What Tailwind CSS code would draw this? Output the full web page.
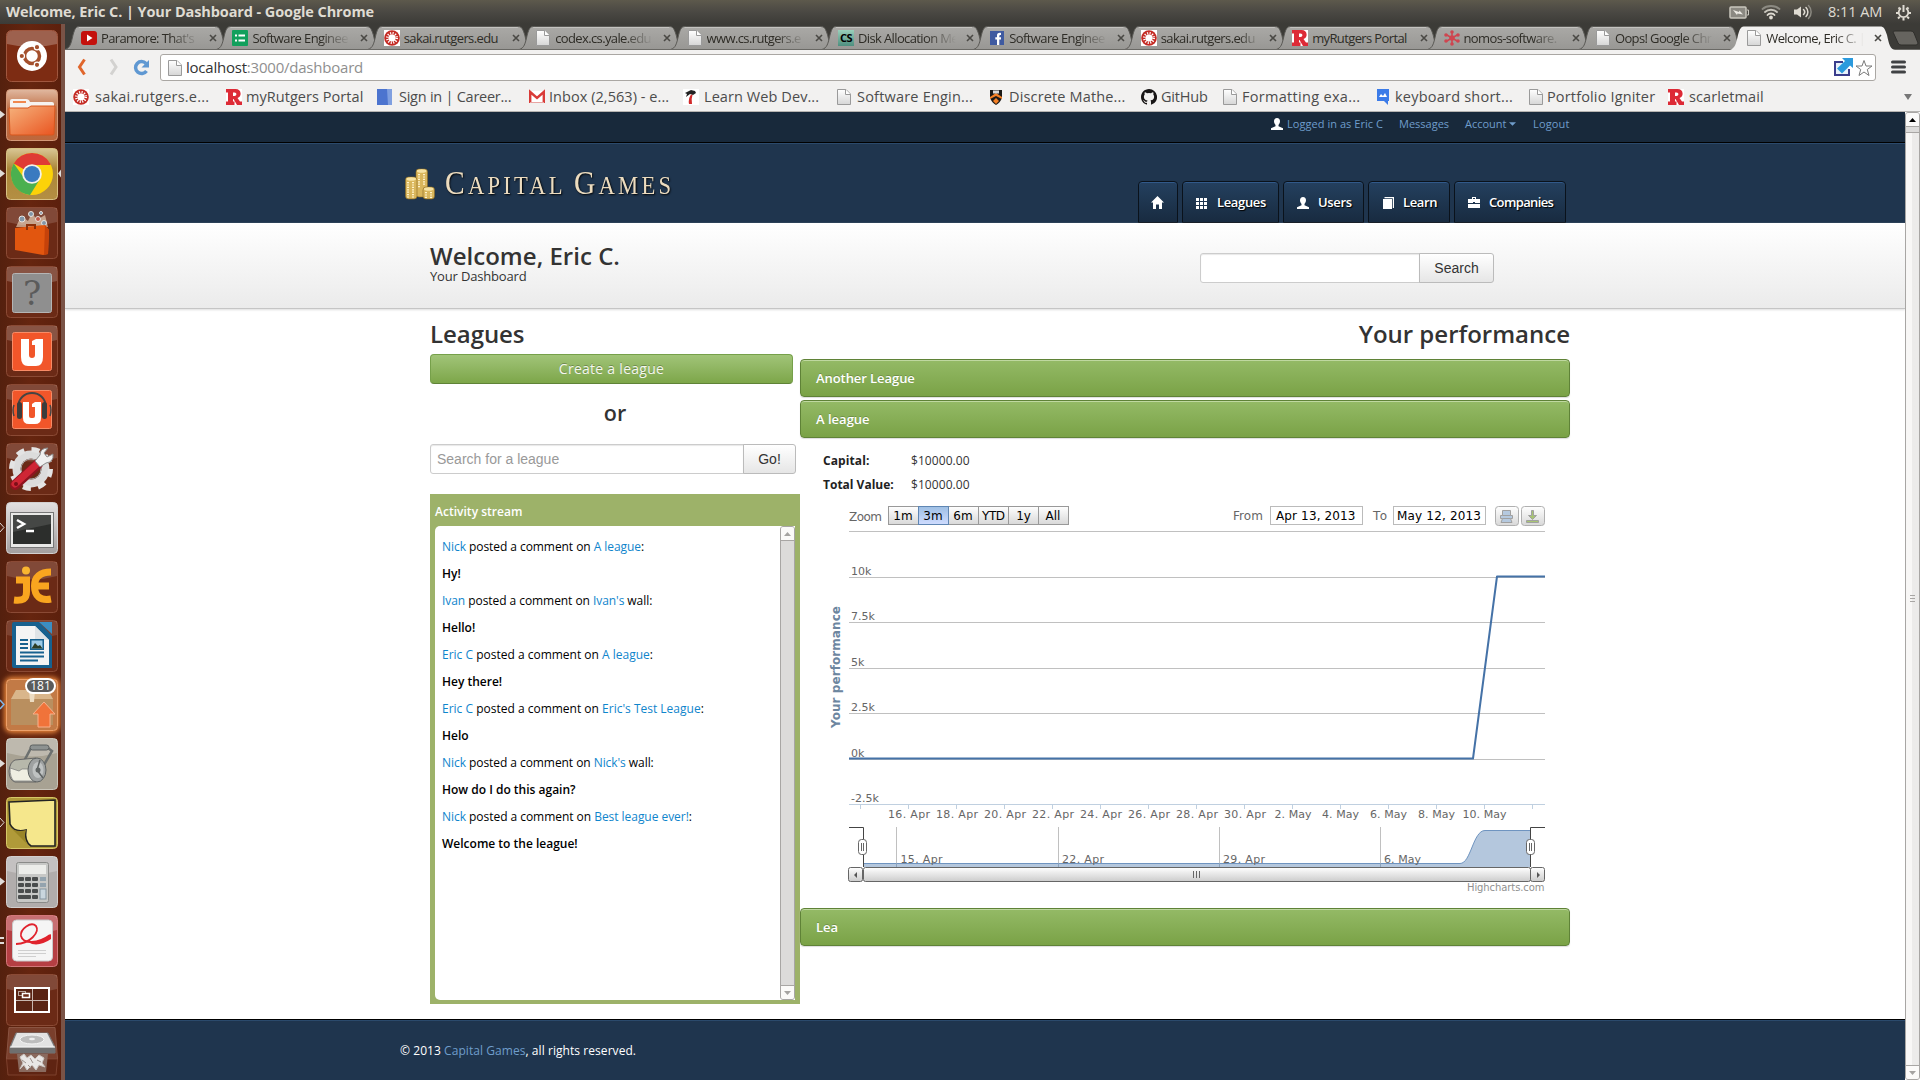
<!DOCTYPE html>
<html lang="en">
<head>
<meta charset="utf-8">
<title>Welcome, Eric C. | Your Dashboard</title>
<script src="https://cdn.jsdelivr.net/npm/@tailwindcss/browser@4"></script>
</head>
<body class="w-[1920px] h-[1080px] overflow-hidden bg-white font-['Open_Sans',sans-serif] flex flex-col">

<!-- shared symbols -->
<svg class="absolute w-0 h-0" aria-hidden="true">
  <defs>
    <linearGradient id="pg" x1="0" y1="0" x2="0" y2="1"><stop offset="0" stop-color="#fff"/><stop offset="1" stop-color="#d6d6d6"/></linearGradient>
    <linearGradient id="tabg" x1="0" y1="0" x2="0" y2="1"><stop offset="0" stop-color="#aaa9a6"/><stop offset="1" stop-color="#989794"/></linearGradient>
    <symbol id="page" viewBox="0 0 16 16"><path d="M1.5 .5H10L14.5 5V15.5H1.5Z" fill="url(#pg)" stroke="#9a9a9a"/><path d="M9.5 .5V5.5H14.5" fill="#fff" stroke="#9a9a9a"/></symbol>
    <symbol id="sakai" viewBox="0 0 16 16"><rect width="16" height="16" fill="#fff"/><circle cx="8" cy="8" r="7.8" fill="#c42b24"/><circle cx="8" cy="8" r="4.7" fill="none" stroke="#fff" stroke-width="2.6" stroke-dasharray="1.1 1.36"/><circle cx="8" cy="8" r="3.6" fill="#fff"/></symbol>
    <symbol id="rut" viewBox="0 0 16 16"><rect width="16" height="16" fill="#fff"/><path fill="#dd2a36" fill-rule="evenodd" d="M0 0H9.500C16 0 16 8 11.500 9L14 12.500H16V16H11L7.500 10H7V12.500H8.500V16H0V12.500H2V3.500H0ZM7 3.500V7H8.500C11 7 11 3.500 8.500 3.500Z"/></symbol>
    <symbol id="tab" viewBox="0 0 166 26"><path d="M0 25.500C5 24 6 20 8 11C10 4 11 2.500 15 2.500H150C154 2.500 155 5 157 11C159 20 160 24 165 25.500Z" fill="url(#tabg)" stroke="#5a5955"/><path d="M14 3.500H150" stroke="#c4c3c0" /></symbol>
  </defs>
</svg>

<!-- desktop panel -->
<header class="h-6 shrink-0 flex items-center justify-between pl-1.5 pr-2 bg-linear-to-b from-[#5d594c] via-[#4a4843] to-[#3c3b37] text-[#dfdbd2]">
  <span class="text-[14.5px] leading-6 font-bold tracking-[-0.1px]">Welcome, Eric C. | Your Dashboard - Google Chrome</span>
  <div class="flex items-center">
    <svg class="w-[20px] h-[13px]" viewBox="0 0 20 13"><rect x="1" y="1" width="16" height="11" rx="1" fill="#8b8982" stroke="#c9c6bd" stroke-width="1.500"/><path d="M18 4h1.500v5H18" fill="none" stroke="#c9c6bd"/><path d="M4 4l6 2 .5-1.500L14 8.500 8.500 7.500 8 9Z" fill="#eceae4"/></svg>
    <svg class="ml-3 w-[20px] h-[16px]" viewBox="0 0 20 16" fill="none" stroke-linecap="round" stroke-width="1.800"><path d="M1.500 5C6 1 14 1 18.500 5" stroke="#8c8a82"/><path d="M4 8C7 5 13 5 16 8" stroke="#c9c6bd"/><path d="M6.500 11C8 9 12 9 13.500 11" stroke="#dfdbd2"/><circle cx="10" cy="13.500" r="1" fill="#dfdbd2" stroke="#dfdbd2"/></svg>
    <svg class="ml-3 w-[20px] h-[16px]" viewBox="0 0 20 16" fill="none" stroke="#dfdbd2" stroke-width="1.500" stroke-linecap="round"><path d="M1 5.500H4L8 2.500V13.500L4 10.500H1Z" fill="#dfdbd2" stroke="none"/><path d="M10.500 5.500C12 7 12 9 10.500 10.500"/><path d="M13 3.500C15.500 6 15.500 10 13 12.500"/><path d="M15.500 1.500C19 5 19 11 15.500 14.500" stroke="#8c8a82"/></svg>
    <span class="ml-[15px] w-[54px] text-[14.5px] leading-6 tracking-[-0.05px] whitespace-nowrap">8:11 AM</span>
    <svg class="ml-[13px] w-[17px] h-[17px]" viewBox="0 0 17 17" fill="none" stroke="#dfdbd2"><path d="M6 4.300A4.800 4.800 0 1 0 11 4.300" stroke-width="1.800"/><path d="M8.500 1V8" stroke-width="2"/><path d="M3.500 3.500L4.800 4.800M13.500 3.500L12.200 4.800M1 9H3M14 9H16M3 14.500L4.800 12.800M14 14.500L12.200 12.800M8.500 14V16.500" stroke-width="2"/></svg>
  </div>
</header>

<div class="flex flex-1 min-h-0">

  <!-- launcher -->
  <nav class="relative w-[65px] shrink-0 flex flex-col gap-[7px] pt-1.5 pl-1.5 bg-[#5f230f] bg-linear-to-r from-[#54200e] via-[#66250f] to-[#5c200d] border-r-4 border-[#7a5346] overflow-hidden">
    <svg class="w-[52px] h-[52px] shrink-0" viewBox="0 0 52 52"><rect x=".5" y=".5" width="51" height="51" rx="5" fill="#7d2c13" stroke="#a0573f"/><path d="M1 6Q1 1 6 1H46Q51 1 51 6V14Q26 20 1 14Z" fill="#fff" opacity=".25"/><circle cx="26" cy="26" r="15" fill="#fff"/><circle cx="26" cy="26" r="7.500" fill="none" stroke="#a4502d" stroke-width="3.500"/><g fill="#a4502d" stroke="#fff" stroke-width="1.200"><circle cx="15.800" cy="26" r="2.700"/><circle cx="31" cy="17.200" r="2.700"/><circle cx="31" cy="34.800" r="2.700"/></g></svg>
    <svg class="w-[52px] h-[52px] shrink-0" viewBox="0 0 52 52"><defs><linearGradient id="t2" x1="0" y1="0" x2="0" y2="1"><stop offset="0" stop-color="#e0b8a0"/><stop offset=".4" stop-color="#bf6d43"/><stop offset="1" stop-color="#bd673c"/></linearGradient><linearGradient id="f2" x1="0" y1="0" x2="1" y2="1"><stop offset="0" stop-color="#f6b27c"/><stop offset="1" stop-color="#e95420"/></linearGradient></defs><rect x=".5" y=".5" width="51" height="51" rx="4" fill="url(#t2)" stroke="#d49878"/><path d="M4 12Q4 10 6 10H20Q23 10 24 13H46Q48 13 48 15V24H4Z" fill="#f6f3f0"/><rect x="7" y="12" width="13" height="2" fill="#f0884e"/><path d="M3 19H22L25 17H49L48 45Q48 46 46 46H6Q4 46 4 45Z" fill="url(#f2)" stroke="#d8561d"/></svg>
    <svg class="w-[52px] h-[52px] shrink-0" viewBox="0 0 52 52"><defs><linearGradient id="t3" x1="0" y1="0" x2="0" y2="1"><stop offset="0" stop-color="#d9c795"/><stop offset=".4" stop-color="#ab8639"/><stop offset="1" stop-color="#b48f43"/></linearGradient></defs><rect x=".5" y=".5" width="51" height="51" rx="4" fill="url(#t3)" stroke="#d8c184"/><circle cx="26" cy="26" r="21" fill="#fcd209"/><path d="M26 26L7.800 15.500A21 21 0 0 1 44.200 15.500L44.500 17H26Z" fill="#df3b35"/><path d="M7.800 15.500A21 21 0 0 0 24 47L34 31 26 26 18 30Z" fill="#4bb04f"/><circle cx="26" cy="26" r="9.800" fill="#f3f1ea"/><circle cx="26" cy="26" r="8" fill="#3a7ac0"/></svg>
    <svg class="w-[52px] h-[52px] shrink-0" viewBox="0 0 52 52"><rect x=".5" y=".5" width="51" height="51" rx="4" fill="#6b2a16" stroke="#8a4a35"/><path d="M1 1H51V15Q26 22 1 15Z" fill="#fff" opacity=".15"/><path d="M10 20L15 9 22 14 26 6 31 13 39 8 42 20Z" fill="#f9e2c8" opacity=".6"/><g stroke="#e8e4e0" fill="#8296a8" stroke-width="1"><circle cx="16" cy="12" r="3"/><circle cx="25" cy="7" r="2.500"/><circle cx="32" cy="12" r="2.500" fill="#c05a4a"/><circle cx="38" cy="16" r="2.500"/><circle cx="35" cy="6" r="1.500"/></g><path d="M9 21L39 18 43 23 42 47 37 48 9 43Z" fill="#e2560f"/><path d="M39 18L43 23 42 47 38 48Z" fill="#c5420a"/><path d="M21 23V18H29V22" fill="none" stroke="#8b300a" stroke-width="2"/></svg>
    <svg class="w-[52px] h-[52px] shrink-0" viewBox="0 0 52 52"><rect x=".5" y=".5" width="51" height="51" rx="4" fill="#6b2a16" stroke="#8a4a35"/><path d="M1 1H51V15Q26 22 1 15Z" fill="#fff" opacity=".2"/><rect x="6.500" y="7.500" width="39" height="39" rx="2" fill="#8f8f8f" stroke="#b5b5b5"/><text x="26" y="39" text-anchor="middle" font-family="DejaVu Serif" font-size="34" fill="#5b5b5b">?</text></svg>
    <svg class="w-[52px] h-[52px] shrink-0" viewBox="0 0 52 52"><rect x=".5" y=".5" width="51" height="51" rx="4" fill="#6b2a16" stroke="#8a4a35"/><path d="M1 1H51V15Q26 22 1 15Z" fill="#fff" opacity=".2"/><rect x="6.500" y="7.500" width="39" height="38" rx="2" fill="#f1562a" stroke="#f98b66"/><path d="M15 14H23V30Q23 33 26 33Q29 33 29 30V20H26V16L30 14H37V32Q37 41 30 41H22Q15 41 15 32Z" fill="#fff"/></svg>
    <svg class="w-[52px] h-[52px] shrink-0" viewBox="0 0 52 52"><rect x=".5" y=".5" width="51" height="51" rx="4" fill="#6b2a16" stroke="#8a4a35"/><path d="M1 1H51V15Q26 22 1 15Z" fill="#fff" opacity=".15"/><rect x="6.500" y="6.500" width="39" height="38" rx="2" fill="#f1562a" stroke="#f98b66"/><path d="M17 18H23V32Q23 34 25 34H27Q29 34 29 32V23H26V20L29 18H35V34Q35 40 29 40H23Q17 40 17 34Z" fill="#fff"/><path d="M12 24C12 4 40 4 40 24" fill="none" stroke="#444" stroke-width="2"/><rect x="11" y="18" width="5" height="17" rx="2.500" fill="#3c3c3c"/><rect x="36" y="18" width="5" height="17" rx="2.500" fill="#3c3c3c"/><path d="M8 21Q6 26 8 32M44 21Q46 26 44 32" stroke="#444" fill="none" stroke-width="1.500"/></svg>
    <svg class="w-[52px] h-[52px] shrink-0" viewBox="0 0 52 52"><rect x=".5" y=".5" width="51" height="51" rx="4" fill="#6b2a16" stroke="#8a4a35"/><path d="M1 1H51V15Q26 22 1 15Z" fill="#fff" opacity=".15"/><circle cx="25" cy="26" r="14.500" fill="none" stroke="#dcdcdc" stroke-width="8"/><circle cx="25" cy="26" r="19.500" fill="none" stroke="#e4e4e4" stroke-width="5" stroke-dasharray="8 7.300"/><circle cx="25" cy="26" r="10" fill="none" stroke="#aaa"/><path d="M9 42L32 21" stroke="#8f1420" stroke-width="10" stroke-linecap="round"/><path d="M9 41L32 20" stroke="#cf2635" stroke-width="7" stroke-linecap="round"/><path d="M29 18L34 12Q34 5 42 5L38 10 41 14 47 11Q48 19 40 20L34 24Z" fill="#f0f0f0" stroke="#8b8b8b"/><circle cx="10" cy="41" r="2" fill="#7d0f18"/></svg>
    <svg class="w-[52px] h-[52px] shrink-0" viewBox="0 0 52 52"><defs><linearGradient id="t9" x1="0" y1="0" x2="0" y2="1"><stop offset="0" stop-color="#e2e0e0"/><stop offset="1" stop-color="#a39f9f"/></linearGradient></defs><rect x=".5" y=".5" width="51" height="51" rx="4" fill="url(#t9)" stroke="#d3d0d0"/><rect x="4.500" y="10.500" width="43" height="35" fill="#e9e9e7" stroke="#777"/><rect x="7" y="13" width="38" height="29" fill="#2c2e2c"/><path d="M7 13H45V22L7 30Z" fill="#454745"/><path d="M11 18L18 22 11 26" fill="none" stroke="#fff" stroke-width="2.500"/><path d="M20 29H28" stroke="#fff" stroke-width="2.500"/></svg>
    <svg class="w-[52px] h-[52px] shrink-0" viewBox="0 0 52 52"><rect x=".5" y=".5" width="51" height="51" rx="4" fill="#6b2a16" stroke="#8a4a35"/><path d="M1 1H51V15Q26 22 1 15Z" fill="#fff" opacity=".15"/><g fill="none" stroke="#f9a51f" stroke-width="7"><path d="M10 19H20.500V31C20.500 38 17 40 8 39"/><path d="M45 11C34 11 28.500 16 28.500 25C28.500 35 34 40 45 38M29 25H43"/></g><circle cx="20" cy="9.500" r="4" fill="#f9b530"/></svg>
    <svg class="w-[52px] h-[52px] shrink-0" viewBox="0 0 52 52"><rect x=".5" y=".5" width="51" height="51" rx="4" fill="#6b2a16" stroke="#8a4a35"/><path d="M1 1H51V15Q26 22 1 15Z" fill="#fff" opacity=".12"/><path d="M8 2H33L46 16V48H8Q6 48 6 46V4Q6 2 8 2Z" fill="#17618f"/><path d="M33 2H46V14Z" fill="#3b8ec2"/><path d="M10 6H29L43 20V45H10Z" fill="#f4f4f4"/><path d="M29 6L43 20H29Z" fill="#dfe3e6"/><rect x="24" y="19" width="14" height="11" fill="#17618f"/><rect x="25.500" y="20.500" width="11" height="8" fill="#9ccbe8"/><path d="M25.500 28.500L29 23 32 26 34 25 36.500 28.500Z" fill="#2b3e26"/><path d="M14 20H22M14 24H22M14 28H22M14 32.500H38M14 36.500H38M14 40.500H32" stroke="#17618f" stroke-width="2"/></svg>
    <div class="relative w-[52px] h-[52px] shrink-0 rounded-md shadow-[0_0_5px_2px_#e8853a]">
      <svg class="w-[52px] h-[52px]" viewBox="0 0 52 52"><rect x=".5" y=".5" width="51" height="51" rx="4" fill="#c27a46" stroke="#eda069"/><path d="M5 20L10 11H42L47 20V46H5Z" fill="#b98f5f"/><path d="M5 20L10 11H42L47 20Z" fill="#d9b68b"/><path d="M23 11H29L28 23H24Z" fill="#ecdcc2"/><path d="M38 23L49 35H44V48H32V35H27Z" fill="#f0733a" stroke="#f9b18b"/></svg>
      <span class="absolute left-[19px] -top-px w-[31px] h-[16px] rounded-full border-2 border-white bg-[#5b5b5b] text-white text-[12px] leading-[11px] text-center">181</span>
    </div>
    <svg class="w-[52px] h-[52px] shrink-0" viewBox="0 0 52 52"><rect x=".5" y=".5" width="51" height="51" rx="4" fill="#a8a293" stroke="#c9c5ba"/><path d="M1 1H51V15Q26 22 1 15Z" fill="#fff" opacity=".25"/><path d="M16 27L25 10H42L46 13 35 32" fill="none" stroke="#6c706f" stroke-width="2.500"/><rect x="24" y="7" width="19" height="5" rx="2.500" fill="#8d9291" stroke="#5c6060"/><path d="M9 22L30 20V44L9 44Q3 42 3 33Q4 24 9 22Z" fill="#b7b8ab" stroke="#666"/><path d="M4 30L13 33 16 31 29 31V43L8 43Q4 40 4 30Z" fill="#efeee2" stroke="#777" stroke-width=".7"/><ellipse cx="31" cy="32" rx="9" ry="12" fill="#9ea1a1" stroke="#5e6262"/><ellipse cx="32" cy="32" rx="5.500" ry="8" fill="#bfc2c2"/><path d="M34 22L31 32 37 40" stroke="#5e6262" fill="none" stroke-width="1.500"/><circle cx="32" cy="32" r="2.500" fill="#606464"/></svg>
    <svg class="w-[52px] h-[52px] shrink-0" viewBox="0 0 52 52"><rect x=".5" y=".5" width="51" height="51" rx="4" fill="#b09a39" stroke="#d6c768"/><path d="M3 5L49 3V49H25Q18 44 20 33Q8 36 4 27Z" fill="#f5e78c" stroke="#222" stroke-width="1.600"/><path d="M4 30Q10 36 20 33Q17 42 22 48Z" fill="#998527"/></svg>
    <svg class="w-[52px] h-[52px] shrink-0" viewBox="0 0 52 52"><rect x=".5" y=".5" width="51" height="51" rx="4" fill="#b1adac" stroke="#d2cfce"/><path d="M1 1H51V15Q26 22 1 15Z" fill="#fff" opacity=".25"/><rect x="10.500" y="6.500" width="32" height="40" rx="2" fill="#c7c8c6" stroke="#8a8b89"/><rect x="13" y="9" width="27" height="9" fill="#ecedea"/><g fill="#4a4d4d"><rect x="12" y="21" width="6" height="4" rx="1"/><rect x="19" y="21" width="6" height="4" rx="1"/><rect x="26" y="21" width="6" height="4" rx="1"/><rect x="12" y="27" width="6" height="4" rx="1"/><rect x="19" y="27" width="6" height="4" rx="1"/><rect x="26" y="27" width="6" height="4" rx="1"/><rect x="12" y="33" width="6" height="4" rx="1"/><rect x="19" y="33" width="6" height="4" rx="1"/><rect x="26" y="33" width="6" height="4" rx="1"/><rect x="12" y="39" width="13" height="4" rx="1"/><rect x="26" y="39" width="6" height="4" rx="1"/></g><g fill="#93a3ae"><rect x="34" y="21" width="6" height="4"/><rect x="34" y="27" width="6" height="4"/><rect x="34" y="33" width="6" height="10" fill="#c9d6de" stroke="#8595a0"/></g></svg>
    <svg class="w-[52px] h-[52px] shrink-0" viewBox="0 0 52 52"><rect x=".5" y=".5" width="51" height="51" rx="4" fill="#b53f43" stroke="#d3777a"/><path d="M1 1H51V15Q26 22 1 15Z" fill="#fff" opacity=".25"/><rect x="6.500" y="5" width="40" height="41" rx="4" fill="#f5f5f5" stroke="#c9c9c9"/><path d="M10 29C24 29 34 17 30 11C25 6 14 14 15 21C17 29 32 29 44 20" fill="none" stroke="#e0232d" stroke-width="1.800"/><path d="M20 26Q34 28 45 19V24Q35 31 26 29Z" fill="#e0232d"/><path d="M12 35.500H40M12 38.500H40M12 41.500H30" stroke="#cfcfcf"/></svg>
    <svg class="w-[52px] h-[52px] shrink-0" viewBox="0 0 52 52"><rect x=".5" y=".5" width="51" height="51" rx="4" fill="#6b2a16" stroke="#8a4a35"/><path d="M1 1H51V15Q26 22 1 15Z" fill="#fff" opacity=".15"/><rect x="9" y="14" width="34" height="24" fill="#5a2414" stroke="#fff" stroke-width="2"/><path d="M26.500 15V37M10 26.500H42" stroke="#c8b7b0"/><rect x="12.500" y="17.500" width="7" height="4" fill="none" stroke="#b9a59c"/><rect x="16.500" y="19.500" width="7" height="4" fill="#6b2a16" stroke="#fff" stroke-width="1.500"/></svg>
    <svg class="-mt-1.5 w-[52px] h-[53px] shrink-0" viewBox="0 0 52 53"><path d="M3 .5H49L51.500 32H.5Z" fill="#7a3f2c" stroke="#8a5442"/><path d="M.5 32H51.500L50 48H2Z" fill="#5f2412" stroke="#7d402d"/><path d="M10 6H42L49 20V26H4V20Z" fill="#8c8c8c" stroke="#777"/><path d="M11 6H41L48 20H5Z" fill="#e2e2e2"/><ellipse cx="26" cy="12.500" rx="12" ry="4.500" fill="#bdbdbd" stroke="#f5f5f5"/><ellipse cx="26" cy="12" rx="3" ry="1.200" fill="#eee"/><path d="M4 20H49" stroke="#f6f6f6"/><rect x="4" y="21" width="45" height="5" fill="#6f6f6f"/><path d="M11 27H42L40 45H13Z" fill="#8a6a5e"/><path d="M14 30L18 27 21 31 25 28 29 32 33 28 38 31 36 36 39 40 33 38 30 43 26 38 21 43 18 38 14 42 17 36Z" fill="#e9e7e5" stroke="#cbc6c2"/><path d="M16 33L20 36M24 31L27 36M31 33L35 35M22 38L25 41" stroke="#9d938d"/></svg>
    <!-- running-app markers -->
    <svg class="absolute left-0 top-0 w-[61px] h-[1056px]" viewBox="0 24 61 1056" fill="#e0dcd9"><path d="M0 110.500L5 114.500 0 118.500ZM0 169.500L5 173.500 0 177.500ZM61 169.500L58 173.500 61 177.500ZM0 759.500L5 763.500 0 767.500ZM0 877.500L5 881.500 0 885.500ZM0 937H4V939H0ZM0 942H4V944H0Z"/><path d="M0 523L4 527.500 0 532M0 818L4 822.500 0 827" fill="none" stroke="#e0dcd9"/><path d="M0 700L4 704.500 0 709" fill="none" stroke="#7fb5e6" stroke-width="1.500"/></svg>
  </nav>

  <!-- browser window -->
  <main class="flex-1 min-w-0 flex flex-col">

    <!-- tab strip -->
    <div class="relative h-[26px] shrink-0 bg-[#3c3b37] text-[13px] leading-[24px] text-[#2e2c26] overflow-hidden">
      <svg class="absolute inset-0 w-[1855px] h-[26px]" viewBox="0 0 1855 26">
        <use href="#tab" x="0" width="166" height="26"/><use href="#tab" x="151.400" width="166" height="26"/><use href="#tab" x="302.800" width="166" height="26"/><use href="#tab" x="454.200" width="166" height="26"/><use href="#tab" x="605.600" width="166" height="26"/><use href="#tab" x="757" width="166" height="26"/><use href="#tab" x="908.400" width="166" height="26"/><use href="#tab" x="1059.800" width="166" height="26"/><use href="#tab" x="1211.200" width="166" height="26"/><use href="#tab" x="1362.600" width="166" height="26"/><use href="#tab" x="1514" width="166" height="26"/>
        <path d="M0 25.500H1855" stroke="#6a6965"/>
        <path d="M1665 26C1670 24 1671 20 1673 11C1675 4 1676 2.500 1680 2.500H1815C1819 2.500 1820 5 1822 11C1824 20 1825 25 1830 26Z" fill="#f2f1f0"/>
        <path d="M1828 8Q1828 7 1830 7H1846Q1848 7 1849 9L1853 19Q1853 21 1851 21H1836Q1834 21 1833 19Z" fill="#66645f" stroke="#2f2e2b"/>
      </svg>
      <div class="relative h-[26px] pt-[2px] pl-[16px] flex tracking-[-0.62px]">
        <div class="w-[151.4px] shrink-0 flex items-center"><svg class="w-4 h-4 shrink-0" viewBox="0 0 16 16"><rect y="1" width="16" height="14" rx="3" fill="#c4110d"/><path d="M6 4.500L11.500 8 6 11.500Z" fill="#fff"/></svg><span class="ml-1 w-[98px] whitespace-nowrap mask-r-from-70%">Paramore: That's</span><svg class="ml-2.5 w-2 h-2" viewBox="0 0 8 8"><path d="M1 1L7 7M7 1L1 7" stroke="#4a4945" stroke-width="1.600"/></svg></div>
        <div class="w-[151.4px] shrink-0 flex items-center"><svg class="w-4 h-4 shrink-0" viewBox="0 0 16 16"><rect width="16" height="16" rx="1" fill="#12a05c"/><path d="M3 5.500H5M3 10.500H5M6.500 5.500H13M6.500 10.500H13" stroke="#fff" stroke-width="1.800"/></svg><span class="ml-1 w-[98px] whitespace-nowrap mask-r-from-70%">Software Enginee</span><svg class="ml-2.5 w-2 h-2" viewBox="0 0 8 8"><path d="M1 1L7 7M7 1L1 7" stroke="#4a4945" stroke-width="1.600"/></svg></div>
        <div class="w-[151.4px] shrink-0 flex items-center"><svg class="w-4 h-4 shrink-0"><use href="#sakai"/></svg><span class="ml-1 w-[98px] whitespace-nowrap">sakai.rutgers.edu</span><svg class="ml-2.5 w-2 h-2" viewBox="0 0 8 8"><path d="M1 1L7 7M7 1L1 7" stroke="#4a4945" stroke-width="1.600"/></svg></div>
        <div class="w-[151.4px] shrink-0 flex items-center"><svg class="w-4 h-4 shrink-0"><use href="#page"/></svg><span class="ml-1 w-[98px] whitespace-nowrap mask-r-from-70%">codex.cs.yale.edu</span><svg class="ml-2.5 w-2 h-2" viewBox="0 0 8 8"><path d="M1 1L7 7M7 1L1 7" stroke="#4a4945" stroke-width="1.600"/></svg></div>
        <div class="w-[151.4px] shrink-0 flex items-center"><svg class="w-4 h-4 shrink-0"><use href="#page"/></svg><span class="ml-1 w-[98px] whitespace-nowrap mask-r-from-70%">www.cs.rutgers.e</span><svg class="ml-2.5 w-2 h-2" viewBox="0 0 8 8"><path d="M1 1L7 7M7 1L1 7" stroke="#4a4945" stroke-width="1.600"/></svg></div>
        <div class="w-[151.4px] shrink-0 flex items-center"><span class="w-4 h-4 shrink-0 bg-linear-to-b from-[#9ad0bb] to-[#4d8f7f] text-black text-[11px] leading-4 font-bold text-center">CS</span><span class="ml-1 w-[98px] whitespace-nowrap mask-r-from-70%">Disk Allocation Me</span><svg class="ml-2.5 w-2 h-2" viewBox="0 0 8 8"><path d="M1 1L7 7M7 1L1 7" stroke="#4a4945" stroke-width="1.600"/></svg></div>
        <div class="w-[151.4px] shrink-0 flex items-center"><svg class="w-4 h-4 shrink-0" viewBox="0 0 16 16"><rect x="1" y="1" width="14" height="14" fill="#3f5aa0"/><path d="M8 15V9.500H6.300V7.200H8V5.500C8 3.500 9 2.600 12 2.900V5C10.500 5 10.300 5.200 10.300 7.200H12V9.500H10.300V15Z" fill="#fff"/></svg><span class="ml-1 w-[98px] whitespace-nowrap mask-r-from-70%">Software Enginee</span><svg class="ml-2.5 w-2 h-2" viewBox="0 0 8 8"><path d="M1 1L7 7M7 1L1 7" stroke="#4a4945" stroke-width="1.600"/></svg></div>
        <div class="w-[151.4px] shrink-0 flex items-center"><svg class="w-4 h-4 shrink-0"><use href="#sakai"/></svg><span class="ml-1 w-[98px] whitespace-nowrap mask-r-from-80%">sakai.rutgers.edu</span><svg class="ml-2.5 w-2 h-2" viewBox="0 0 8 8"><path d="M1 1L7 7M7 1L1 7" stroke="#4a4945" stroke-width="1.600"/></svg></div>
        <div class="w-[151.4px] shrink-0 flex items-center"><svg class="w-4 h-4 shrink-0"><use href="#rut"/></svg><span class="ml-1 w-[98px] whitespace-nowrap">myRutgers Portal</span><svg class="ml-2.5 w-2 h-2" viewBox="0 0 8 8"><path d="M1 1L7 7M7 1L1 7" stroke="#4a4945" stroke-width="1.600"/></svg></div>
        <div class="w-[151.4px] shrink-0 flex items-center"><svg class="w-4 h-4 shrink-0" viewBox="0 0 16 16" stroke="#cf4650" stroke-width="1.600" fill="#cf4650"><path d="M8 8V1.500M8 8V14.500M8 8L2 4.500M8 8L14 4.500M8 8L2 11.500M8 8L14 11.500"/><circle cx="8" cy="8" r="2"/><circle cx="8" cy="2" r="1"/><circle cx="8" cy="14" r="1"/><circle cx="2" cy="5" r="1"/><circle cx="14" cy="5" r="1"/><circle cx="2" cy="11" r="1"/><circle cx="14" cy="11" r="1"/></svg><span class="ml-1 w-[98px] whitespace-nowrap mask-r-from-70%">nomos-software.</span><svg class="ml-2.5 w-2 h-2" viewBox="0 0 8 8"><path d="M1 1L7 7M7 1L1 7" stroke="#4a4945" stroke-width="1.600"/></svg></div>
        <div class="w-[151.4px] shrink-0 flex items-center"><svg class="w-4 h-4 shrink-0"><use href="#page"/></svg><span class="ml-1 w-[98px] whitespace-nowrap mask-r-from-70%">Oops! Google Chr</span><svg class="ml-2.5 w-2 h-2" viewBox="0 0 8 8"><path d="M1 1L7 7M7 1L1 7" stroke="#4a4945" stroke-width="1.600"/></svg></div>
        <div class="w-[151.4px] shrink-0 flex items-center"><svg class="w-4 h-4 shrink-0"><use href="#page"/></svg><span class="ml-1 w-[98px] whitespace-nowrap mask-r-from-70%">Welcome, Eric C. |</span><svg class="ml-2.5 w-2 h-2" viewBox="0 0 8 8"><path d="M1 1L7 7M7 1L1 7" stroke="#4a4945" stroke-width="1.600"/></svg></div>
      </div>
    </div>

    <!-- toolbar -->
    <div class="h-[34px] shrink-0 bg-[#f2f1f0] flex items-center pl-3 pr-[14px]">
      <svg class="w-[11px] h-[18px]" viewBox="0 0 11 18"><path d="M7.500 1.500L2.500 9 7.500 16.500" fill="none" stroke="#e0662c" stroke-width="3"/></svg>
      <svg class="ml-5 w-[11px] h-[18px]" viewBox="0 0 11 18"><path d="M3 1.500L8 9 3 16.500" fill="none" stroke="#d3d2d0" stroke-width="3"/></svg>
      <svg class="ml-3.5 w-[17px] h-[17px]" viewBox="0 0 17 17"><path d="M13 4.500A6 6 0 1 0 13.500 12" fill="none" stroke="#5f98d2" stroke-width="3.500"/><path d="M16 1V8.500H8.500Z" fill="#5f98d2"/></svg>
      <div class="ml-[10px] flex-1 h-[27px] mt-[1px] bg-white border border-[#aaa7a3] rounded-[3px] flex items-center pl-[6px] pr-[2px]">
        <svg class="w-4 h-4"><use href="#page"/></svg>
        <span class="ml-[3px] -mt-0.5 text-[15px] leading-6 text-[#8f8f8f] tracking-[-0.22px]"><span class="text-[#333]">localhost</span>:3000/dashboard</span>
        <svg class="ml-auto w-[20px] h-[19px]" viewBox="0 0 20 19"><path d="M10 4H2V17H16V11" fill="#e8f2fa" stroke="#3a3d8c" stroke-width="2"/><path d="M9 0H20V10L17 7.500 9 15.500 4 10.500 12 3Z" fill="#2b9add"/></svg>
        <svg class="ml-[2px] w-[18px] h-[18px]" viewBox="0 0 18 18"><path d="M9 1.500L11 7H17L12.300 10.500 14 16.500 9 13 4 16.500 5.700 10.500 1 7H7Z" fill="#fff" stroke="#7a7a7a"/></svg>
      </div>
      <svg class="ml-[15px] w-[15px] h-[14px]" viewBox="0 0 15 14"><path d="M1.500 2H13.500M1.500 7H13.500M1.500 12H13.500" stroke="#404244" stroke-width="3" stroke-linecap="round"/></svg>
    </div>

    <!-- bookmarks -->
    <div class="relative h-[28px] shrink-0 bg-[#f2f1f0] border-b border-[#b6b4b1] pl-[8px] pb-[2px] flex items-center text-[14.5px] leading-6 text-[#4c4c4c] whitespace-nowrap">
      <div class="w-[153px] shrink-0 flex items-center"><svg class="w-4 h-4 mr-[6px]"><use href="#sakai"/></svg><span class="tracking-[0.22px]">sakai.rutgers.e...</span></div>
      <div class="w-[151px] shrink-0 flex items-center"><svg class="w-4 h-4 mr-[4px]"><use href="#rut"/></svg><span class="tracking-[0.05px]">myRutgers Portal</span></div>
      <div class="w-[152px] shrink-0 flex items-center"><svg class="w-4 h-4 mr-[6px]" viewBox="0 0 16 16"><path d="M0 0H15V16H0Z" fill="#4c74cf"/><path d="M10 0H15V16H11Z" fill="#7f9fe0"/></svg><span class="tracking-[-0.25px]">Sign in | Career...</span></div>
      <div class="w-[154px] shrink-0 flex items-center"><svg class="w-4 h-4 mr-[4px]" viewBox="0 0 16 16"><path d="M0 2H16V14H0Z" fill="#fff"/><path d="M1.200 14V3L8 9 14.800 3V14" fill="none" stroke="#d93b38" stroke-width="2.400"/><path d="M1 13.500H15" stroke="#e8a5a3"/></svg><span class="tracking-[0.05px]">Inbox (2,563) - e...</span></div>
      <div class="w-[153px] shrink-0 flex items-center"><svg class="w-4 h-4 mr-[5px]" viewBox="0 0 16 16"><rect width="16" height="16" fill="#fff"/><path d="M2 4L6 2 8 1 12 2 13 4 10 6 7 5 3 8 4 5Z" fill="#222"/><path d="M8 5.500L9.500 6Q8 10 9 15H6Q5 10 8 5.500Z" fill="#d12a2a"/></svg><span class="tracking-[0.08px]">Learn Web Dev...</span></div>
      <div class="w-[152px] shrink-0 flex items-center"><svg class="w-4 h-4 mr-[5px]"><use href="#page"/></svg><span class="tracking-[0.2px]">Software Engin...</span></div>
      <div class="w-[153px] shrink-0 flex items-center"><svg class="w-4 h-4 mr-[5px]" viewBox="0 0 16 16"><path d="M2 1H14V9Q12 14 8 16Q4 14 2 9Z" fill="#1c1a17"/><path d="M2 8L8 4 14 8V10L8 7 2 10Z" fill="#f58025"/><path d="M5 12L8 9 11 12 8 15Z" fill="#f58025"/><rect x="5" y="1.500" width="6" height="3" fill="#d9d9d9"/></svg><span class="tracking-[0.15px]">Discrete Mathe...</span></div>
      <div class="w-[81px] shrink-0 flex items-center"><svg class="w-4 h-4 mr-[4px]" viewBox="0 0 16 16"><path fill="#181616" d="M8 0C3.580 0 0 3.580 0 8c0 3.540 2.290 6.530 5.470 7.590.4.070.55-.17.55-.38v-1.340c-2.230.48-2.700-1.070-2.700-1.070-.36-.92-.89-1.170-.89-1.170-.73-.5.05-.49.05-.49.8.06 1.230.83 1.230.83.71 1.220 1.870.87 2.330.66.07-.52.28-.87.5-1.070-1.770-.2-3.640-.89-3.640-3.950 0-.87.31-1.590.82-2.150-.08-.2-.36-1.020.08-2.120 0 0 .67-.21 2.200.82a7.600 7.600 0 0 1 4 0c1.530-1.040 2.200-.82 2.200-.82.44 1.100.16 1.920.08 2.120.51.56.82 1.270.82 2.150 0 3.070-1.870 3.750-3.650 3.950.29.25.54.73.54 1.480v2.190c0 .21.150.46.55.38A8 8 0 0 0 8 0Z"/></svg><span class="tracking-[-0.2px]">GitHub</span></div>
      <div class="w-[154px] shrink-0 flex items-center"><svg class="w-4 h-4 mr-[4px]"><use href="#page"/></svg><span class="tracking-[0.3px]">Formatting exa...</span></div>
      <div class="w-[152px] shrink-0 flex items-center"><svg class="w-4 h-4 mr-[3px]" viewBox="0 0 16 16"><path d="M1 0H13V12H12V16L8 12H1Z" fill="#3b7be8"/><path d="M3 8L5 5 7 7 9 4 11 8Z" fill="#fff"/></svg><span class="tracking-[0.22px]">keyboard short...</span></div>
      <div class="w-[140px] shrink-0 flex items-center"><svg class="w-4 h-4 mr-[3px]"><use href="#page"/></svg><span class="tracking-[0.15px]">Portfolio Igniter</span></div>
      <div class="shrink-0 flex items-center"><svg class="w-4 h-4 mr-[5px]"><use href="#rut"/></svg><span class="tracking-[0.1px]">scarletmail</span></div>
      <svg class="ml-auto mr-[8px] w-[8px] h-[6px]" viewBox="0 0 8 6"><path d="M0 0H8L4 6Z" fill="#777"/></svg>
    </div>

    <!-- viewport -->
    <div class="flex-1 min-h-0 flex">
      <div class="w-[1840px] shrink-0 flex flex-col text-[#333]">

        <!-- account bar -->
        <div class="h-[30px] shrink-0 bg-[#18293b] pr-[335px] pt-[3px] flex justify-end items-start text-[11px] leading-[18px] text-[#6f9dcb] whitespace-nowrap">
          <svg class="w-3 h-3 mt-[3px] mr-1" viewBox="0 0 12 12"><path d="M6 0C8 0 9 1.300 9 3.200C9 5 8 6.200 7.500 7V8.300L12 10.200V12H0V10.200L4.500 8.300V7C4 6.200 3 5 3 3.200C3 1.300 4 0 6 0Z" fill="#fff"/></svg>
          <a class="w-[112px] tracking-[0.05px]">Logged in as Eric C</a>
          <a class="w-[66px]">Messages</a>
          <a class="w-[45px]">Account</a>
          <svg class="mt-[7px] -ml-px mr-[17px] w-[7px] h-1" viewBox="0 0 8 4"><path d="M0 0H8L4 4Z" fill="#6f9dcb"/></svg>
          <a class="w-[37px] tracking-[0.15px]">Logout</a>
        </div>

        <!-- masthead -->
        <div class="h-[81px] shrink-0 bg-[#1f354e] border-t border-black shadow-[inset_0_1px_0_#2b4a6c] pl-[340px] pr-[339px] flex justify-between">
          <div class="flex items-start pt-[25px]">
            <svg class="w-[30px] h-[32px]" viewBox="0 0 30 32"><g fill="#d9b65c" stroke="#8c6a22" stroke-width=".6"><rect x="11" y="1" width="11.500" height="28" rx="3"/><rect x=".5" y="9" width="11.500" height="22" rx="3"/><rect x="18" y="19" width="11.500" height="12" rx="3"/></g><g fill="#f6e3a4"><ellipse cx="16.700" cy="3" rx="4.800" ry="1.800"/><ellipse cx="6.200" cy="11" rx="4.800" ry="1.800"/><ellipse cx="23.700" cy="21" rx="4.800" ry="1.800"/></g><path d="M14 6V20M19 6V18M3 14V30M8 14V30M21 24V30M26 24V30" stroke="#fff3cc" stroke-width="2" stroke-dasharray="1.200 1.200"/></svg>
            <span class="ml-[10px] -mt-[3px] origin-left scale-x-[0.87] font-['Liberation_Serif',serif] text-[26px] leading-[36px] tracking-[3.7px] text-[#ecdcbf] whitespace-nowrap [text-shadow:1px_1px_2px_#000]"><span class="text-[34px]">C</span>APITAL <span class="text-[34px]">G</span>AMES</span>
          </div>
          <div class="self-end flex gap-1 text-white text-[13px] font-semibold leading-[18px] tracking-[-0.35px] [text-shadow:1px_1px_1px_#000]">
            <a class="w-[40px] h-[42px] border border-[#0a121b] rounded-t-[4px] bg-linear-to-b from-[#24405f] to-[#182b40] shadow-[inset_0_1px_0_#31598a] flex items-center pl-3"><svg class="w-[13px] h-[13px]" viewBox="0 0 13 13"><path d="M6.500 0L13 6.500H11V13H8V8.500H5V13H2V6.500H0Z" fill="#fff"/></svg></a>
            <a class="w-[97px] h-[42px] border border-[#0a121b] rounded-t-[4px] bg-linear-to-b from-[#24405f] to-[#182b40] shadow-[inset_0_1px_0_#31598a] flex items-center pl-[13px]"><svg class="w-[11px] h-[11px] mt-[2px] mr-[10px]" viewBox="0 0 11 11"><path d="M0 0H3V3H0ZM4 0H7V3H4ZM8 0H11V3H8ZM0 4H3V7H0ZM4 4H7V7H4ZM8 4H11V7H8ZM0 8H3V11H0ZM4 8H7V11H4ZM8 8H11V11H8Z" fill="#fff"/></svg>Leagues</a>
            <a class="w-[81px] h-[42px] border border-[#0a121b] rounded-t-[4px] bg-linear-to-b from-[#24405f] to-[#182b40] shadow-[inset_0_1px_0_#31598a] flex items-center pl-[13px]"><svg class="w-3 h-3 mt-[1px] mr-[9px]" viewBox="0 0 12 12"><path d="M6 0C8 0 9 1.300 9 3.200C9 5 8 6.200 7.500 7V8.300L12 10.200V12H0V10.200L4.500 8.300V7C4 6.200 3 5 3 3.200C3 1.300 4 0 6 0Z" fill="#fff"/></svg>Users</a>
            <a class="w-[82px] h-[42px] border border-[#0a121b] rounded-t-[4px] bg-linear-to-b from-[#24405f] to-[#182b40] shadow-[inset_0_1px_0_#31598a] flex items-center pl-[14px]"><svg class="w-[11px] h-3 mt-[1px] mr-[9px]" viewBox="0 0 11 12"><path d="M1.500 0H11V11H9.800V1.200H1.500ZM0 2H9V12H0Z" fill="#fff"/></svg>Learn</a>
            <a class="w-[112px] h-[42px] border border-[#0a121b] rounded-t-[4px] bg-linear-to-b from-[#24405f] to-[#182b40] shadow-[inset_0_1px_0_#31598a] flex items-center pl-[13px] tracking-[-0.62px]"><svg class="w-3 h-[11px] mt-[1px] mr-[9px]" viewBox="0 0 12 11"><path fill-rule="evenodd" d="M4 0H8V2H12V6H7V5H5V6H0V2H4ZM5 1V2H7V1ZM0 7H12V11H0Z" fill="#fff"/></svg>Companies</a>
          </div>
        </div>

        <!-- page heading -->
        <div class="h-[86px] shrink-0 bg-linear-to-b from-white to-[#ebebeb] border-b border-[#c5c5c5] shadow-[0_1px_2px_#ddd] pl-[365px] pr-[411px] flex justify-between">
          <div class="pt-[21px]">
            <h1 class="text-[24px] leading-6 font-semibold tracking-[0.02px]">Welcome, Eric C.</h1>
            <p class="text-[13px] leading-4 tracking-[-0.17px]">Your Dashboard</p>
          </div>
          <div class="mt-[30px] h-[30px] flex font-['Liberation_Sans',sans-serif] text-[14px] leading-5">
            <div class="w-[220px] bg-white border border-[#ccc] rounded-l-[3px] shadow-[inset_0_1px_1px_#e8e8e8]"></div>
            <button class="-ml-px w-[75px] border border-[#bbb] rounded-r-[3px] bg-linear-to-b from-white to-[#e6e6e6] text-center">Search</button>
          </div>
        </div>

        <!-- content -->
        <div class="h-[710px] shrink-0 pl-[365px] pt-[7px] flex">
          <section class="w-[370px] flex flex-col">
            <h2 class="text-[24px] leading-[36px] font-semibold tracking-[-0.05px]">Leagues</h2>
            <button class="mt-[2px] w-[363px] h-[30px] rounded-[4px] border border-[#76a04a] border-b-[#5f8337] bg-linear-to-b from-[#a1c478] to-[#7da649] text-[14px] leading-5 tracking-[0.27px] text-[#f4f7ee] [text-shadow:0_-1px_0_#0004]">Create a league</button>
            <h3 class="mt-[14px] w-[370px] text-center text-[21.5px] leading-[30px] font-semibold">or</h3>
            <div class="mt-4 h-[30px] flex font-['Liberation_Sans',sans-serif] text-[14px] leading-[28px]">
              <div class="w-[314px] bg-white border border-[#ccc] rounded-l-[3px] shadow-[inset_0_1px_1px_#e8e8e8] pl-[6px] text-[#999]">Search for a league</div>
              <button class="-ml-px w-[53px] border border-[#bbb] rounded-r-[3px] bg-linear-to-b from-white to-[#e6e6e6] text-center">Go!</button>
            </div>
            <div class="mt-5 h-[510px] bg-[#9db269] px-[5px] pt-[9px] pb-1 flex flex-col">
              <h4 class="h-[23px] text-[12px] leading-[18px] font-semibold tracking-[0.02px] text-white">Activity stream</h4>
              <div class="flex-1 bg-white rounded-l-[5px] flex justify-between">
                <div class="pt-[7px] pl-[7px] text-[12px] leading-[27px] text-black [&_a]:text-[#0f85cc]">
                  <p class="tracking-[-0.06px]"><a>Nick</a> posted a comment on <a>A league</a>:</p>
                  <p class="font-semibold">Hy!</p>
                  <p class="tracking-[-0.06px]"><a>Ivan</a> posted a comment on <a>Ivan's</a> wall:</p>
                  <p class="font-semibold">Hello!</p>
                  <p><a>Eric C</a> posted a comment on <a>A league</a>:</p>
                  <p class="font-semibold">Hey there!</p>
                  <p><a>Eric C</a> posted a comment on <a>Eric's Test League</a>:</p>
                  <p class="font-semibold">Helo</p>
                  <p class="tracking-[-0.06px]"><a>Nick</a> posted a comment on <a>Nick's</a> wall:</p>
                  <p class="font-semibold">How do I do this again?</p>
                  <p class="tracking-[-0.04px]"><a>Nick</a> posted a comment on <a>Best league ever!</a>:</p>
                  <p class="font-semibold">Welcome to the league!</p>
                </div>
                <div class="w-[15px] flex flex-col border border-[#a8a6a4] rounded-[3px] bg-[#dcdbda]">
                  <div class="h-[14px] bg-[#fbfaf9] border-b border-[#a8a6a4] rounded-t-[2px] flex items-center justify-center"><svg class="w-[7px] h-1" viewBox="0 0 7 4"><path d="M0 4L3.500 0 7 4Z" fill="#a5a3a1"/></svg></div>
                  <div class="mt-auto h-[14px] bg-[#fbfaf9] border-t border-[#a8a6a4] rounded-b-[2px] flex items-center justify-center"><svg class="w-[7px] h-1" viewBox="0 0 7 4"><path d="M0 0H7L3.500 4Z" fill="#a5a3a1"/></svg></div>
                </div>
              </div>
            </div>
          </section>

          <section class="w-[770px] flex flex-col">
            <h2 class="text-right text-[24px] leading-[36px] font-semibold">Your performance</h2>
            <div class="mt-[7px] h-[38px] rounded-[4px] border border-[#5f8237] bg-linear-to-b from-[#94ba66] to-[#7aa246] shadow-[inset_0_1px_0_#bfd8a0,0_1px_1px_#ddd] pl-[15px] text-[13px] leading-[37px] font-semibold tracking-[-0.07px] text-white [text-shadow:0_-1px_0_#0003]">Another League</div>
            <div class="mt-[3px] h-[38px] rounded-[4px] border border-[#5f8237] bg-linear-to-b from-[#94ba66] to-[#7aa246] shadow-[inset_0_1px_0_#bfd8a0,0_1px_1px_#ddd] pl-[15px] text-[13px] leading-[37px] font-semibold text-white [text-shadow:0_-1px_0_#0003]">A league</div>
            <dl class="mt-[11px] pl-[23px] grid grid-cols-[88px_auto] text-[12px] leading-6">
              <dt class="font-bold text-[#222] tracking-[0.1px]">Capital:</dt><dd class="tracking-[0.07px]">$10000.00</dd>
              <dt class="font-bold text-[#222] whitespace-nowrap">Total Value:</dt><dd class="tracking-[0.07px]">$10000.00</dd>
            </dl>
            <svg class="mt-[3px] w-[770px] h-[400px] shrink-0" viewBox="800 500 770 400" font-family="DejaVu Sans" font-size="11" fill="#666">
              <defs>
                <linearGradient id="b" x1="0" y1="0" x2="0" y2="1"><stop offset="0" stop-color="#fff"/><stop offset="1" stop-color="#d8d8d8"/></linearGradient>
                <linearGradient id="bs" x1="0" y1="0" x2="0" y2="1"><stop offset="0" stop-color="#9ebfe4"/><stop offset="1" stop-color="#cfdcff"/></linearGradient>
                <linearGradient id="sb" x1="0" y1="0" x2="0" y2="1"><stop offset="0" stop-color="#fff"/><stop offset="1" stop-color="#ccc"/></linearGradient>
              </defs>
              <!-- range selector -->
              <text x="849" y="521" font-size="12" textLength="33">Zoom</text>
              <g fill="url(#b)" stroke="#999"><rect x="888.500" y="506.500" width="30" height="18"/><rect x="948.500" y="506.500" width="30" height="18"/><rect x="978.500" y="506.500" width="30" height="18"/><rect x="1008.500" y="506.500" width="30" height="18"/><rect x="1038.500" y="506.500" width="30" height="18"/></g>
              <rect x="918.500" y="506.500" width="30" height="18" fill="url(#bs)" stroke="#5f86b3"/>
              <g font-size="12" fill="#000" text-anchor="middle"><text x="903" y="520">1m</text><text x="933" y="520">3m</text><text x="963" y="520">6m</text><text x="993.500" y="520" textLength="23">YTD</text><text x="1023.500" y="520">1y</text><text x="1053" y="520">All</text></g>
              <text x="1233" y="520" font-size="12" textLength="30">From</text><text x="1373" y="520" font-size="12" textLength="14">To</text>
              <g fill="#fff" stroke="#bbb"><rect x="1270.500" y="506.500" width="92" height="18"/><rect x="1393.500" y="506.500" width="92" height="18"/></g>
              <g font-size="12" fill="#000"><text x="1276" y="520" textLength="79.500">Apr 13, 2013</text><text x="1397" y="520" textLength="84">May 12, 2013</text></g>
              <g fill="url(#b)" stroke="#b0b0b0"><rect x="1495.500" y="506.500" width="23" height="19" rx="3"/><rect x="1521.500" y="506.500" width="23" height="19" rx="3"/></g>
              <path d="M1502.500 510.500h8v5h2v3h-2l1.500 4h-11l1.500-4h-2v-3h2ZM1502.500 515.500h8M1502.500 518.500h8" fill="#b5c9df" stroke="#a0a0a0"/>
              <path d="M1531.500 510.500h2v5h3l-4 4-4-4h3ZM1526.500 520.500h12v2h-12z" fill="#a8c573" stroke="#a0a0a0"/>
              <!-- grid -->
              <path d="M849 531.500H1545M849 577.500H1545M849 622.500H1545M849 668.500H1545M849 713.500H1545M849 759.500H1545" stroke="#c0c0c0"/>
              <path d="M849 804.500H1545M860.500 804v5M908.500 804v5M956.500 804v5M1004.500 804v5M1052.500 804v5M1100.500 804v5M1148.500 804v5M1196.500 804v5M1244.500 804v5M1292.500 804v5M1340.500 804v5M1388.500 804v5M1436.500 804v5M1484.500 804v5M1532.500 804v5" stroke="#c0d0e0"/>
              <g><text x="851" y="575">10k</text><text x="851" y="620">7.5k</text><text x="851" y="666">5k</text><text x="851" y="711">2.5k</text><text x="851" y="757">0k</text><text x="851" y="802">-2.5k</text></g>
              <text transform="translate(840 667) rotate(-90)" text-anchor="middle" font-size="12" font-weight="bold" fill="#6d869f" textLength="122">Your performance</text>
              <path d="M849 758.500H1473L1497 576.500H1545" fill="none" stroke="#4572a7" stroke-width="2" stroke-linejoin="round"/>
              <g text-anchor="middle"><text x="909" y="818" textLength="42">16. Apr</text><text x="957" y="818" textLength="42">18. Apr</text><text x="1005" y="818" textLength="42">20. Apr</text><text x="1053" y="818" textLength="42">22. Apr</text><text x="1101" y="818" textLength="42">24. Apr</text><text x="1149" y="818" textLength="42">26. Apr</text><text x="1197" y="818" textLength="42">28. Apr</text><text x="1245" y="818" textLength="42">30. Apr</text><text x="1293" y="818" textLength="37">2. May</text><text x="1340.500" y="818" textLength="37">4. May</text><text x="1388.500" y="818" textLength="37">6. May</text><text x="1436.500" y="818" textLength="37">8. May</text><text x="1484.500" y="818" textLength="44">10. May</text></g>
              <!-- navigator -->
              <path d="M896.500 827V867M1058.500 827V867M1219.500 827V867M1380.500 827V867" stroke="#c0c0c0"/>
              <path d="M863 863.500H1460C1471 863.500 1473 830.500 1485 830.500H1530V867H863Z" fill="#b4c7dd"/>
              <path d="M863 863.500H1460C1471 863.500 1473 830.500 1485 830.500H1530" fill="none" stroke="#6f94c0"/>
              <path d="M1380.500 863V867M896.500 863V867M1058.500 863V867M1219.500 863V867" stroke="#8aa2bd"/>
              <text x="900.500" y="863" textLength="42">15. Apr</text><text x="1062" y="863" textLength="42">22. Apr</text><text x="1223" y="863" textLength="42">29. Apr</text><text x="1384" y="863" textLength="37">6. May</text>
              <path d="M849 827.500H863.500V867M1545 827.500H1530.500V867" fill="none" stroke="#444"/>
              <g fill="#fff" stroke="#666"><rect x="858.500" y="839.500" width="8" height="15" rx="3"/><rect x="1526.500" y="839.500" width="8" height="15" rx="3"/><path d="M861.500 843v8M863.500 843v8M1529.500 843v8M1531.500 843v8"/></g>
              <g fill="url(#sb)" stroke="#666"><rect x="848.500" y="867.500" width="14" height="14" rx="2"/><rect x="863.500" y="867.500" width="667" height="14" rx="2"/><rect x="1530.500" y="867.500" width="14" height="14" rx="2"/></g>
              <path d="M857 872v6l-3-3ZM1537 872v6l3-3Z" fill="#555"/><path d="M1193.500 871v7M1196.500 871v7M1199.500 871v7" stroke="#666"/>
              <text x="1467" y="891" font-size="10" fill="#909090" textLength="77.500">Highcharts.com</text>
            </svg>
            <div class="mt-2 h-[38px] shrink-0 rounded-[4px] border border-[#5f8237] bg-linear-to-b from-[#94ba66] to-[#7aa246] shadow-[inset_0_1px_0_#bfd8a0,0_1px_1px_#ddd] pl-[15px] text-[13px] leading-[37px] font-semibold text-white [text-shadow:0_-1px_0_#0003]">Lea</div>
          </section>
        </div>

        <!-- footer -->
        <footer class="flex-1 bg-[#1f354e] border-t border-black shadow-[inset_0_1px_0_#2b4a6c] pl-[335px] pt-[21px] text-[12px] leading-5 tracking-[0.06px] text-white">© 2013 <a class="text-[#6f9dcb]">Capital Games</a>, all rights reserved.</footer>
      </div>

      <!-- window scrollbar -->
      <div class="w-[15px] flex flex-col border border-[#a8a6a4] rounded-[3px] bg-[#dcdbda]">
        <div class="h-[14px] bg-[#fbfaf9] border-b border-[#a8a6a4] rounded-t-[2px] flex items-center justify-center"><svg class="w-[7px] h-1" viewBox="0 0 7 4"><path d="M0 4L3.500 0 7 4Z" fill="#000"/></svg></div>
        <div class="mt-[5px] flex-1 border-y border-[#a8a6a4] bg-linear-to-r from-[#f8f7f6] from-50% to-[#ecebea] to-50% flex items-center justify-center"><svg class="w-[5px] h-[8px]" viewBox="0 0 5 8"><path d="M0 .5H5M0 3.500H5M0 6.500H5" stroke="#a8a6a4"/></svg></div>
        <div class="h-[13px] bg-[#fbfaf9] rounded-b-[2px] flex items-center justify-center"><svg class="w-[7px] h-1" viewBox="0 0 7 4"><path d="M0 0H7L3.500 4Z" fill="#a5a3a1"/></svg></div>
      </div>
    </div>
  </main>
</div>
</body>
</html>
